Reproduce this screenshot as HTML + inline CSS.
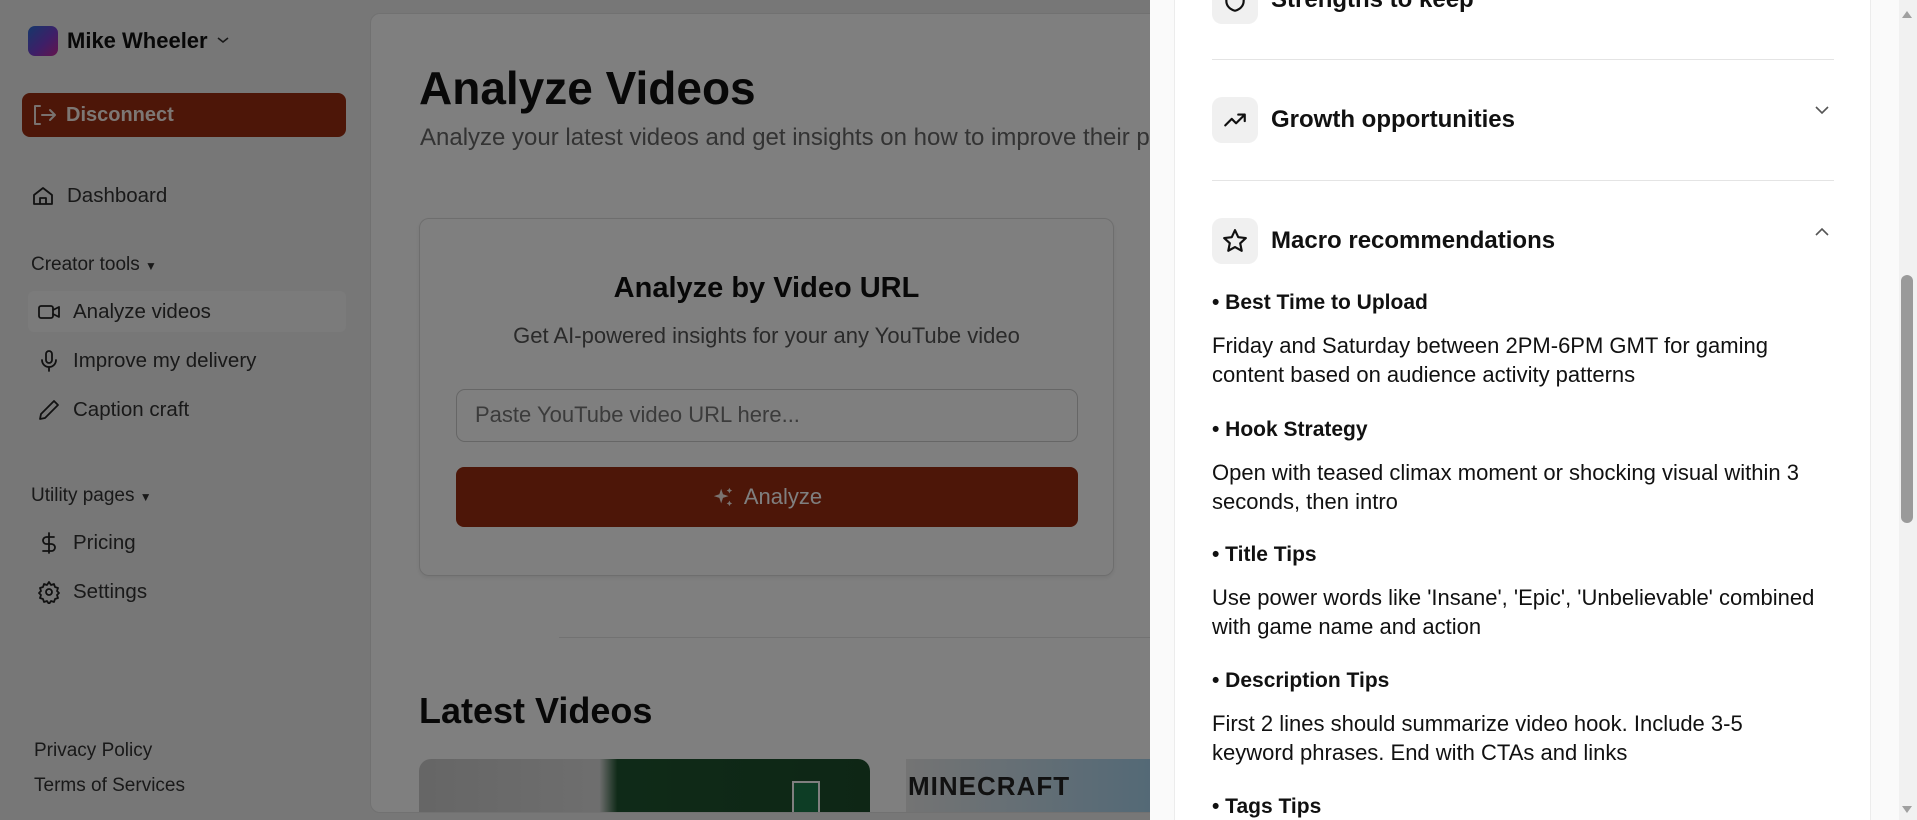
<!DOCTYPE html>
<html style="overflow:hidden;width:1917px;height:820px"><head><meta charset="utf-8"><style>
*{box-sizing:border-box;margin:0;padding:0}
body{width:1917px;height:820px;overflow:hidden;position:relative;background:#eeeeee;font-family:"Liberation Sans",sans-serif;color:#111}
.abs{position:absolute}
.side{left:0;top:0;width:370px;height:820px;background:#eeeeee}
.nav{position:absolute;left:31px;font-size:20.5px;color:#333;display:flex;align-items:center;gap:12px;white-space:nowrap}
.nav svg{width:24px;height:24px;fill:none;stroke:#222;stroke-width:1.8;stroke-linecap:round;stroke-linejoin:round}
.sec{position:absolute;left:31px;font-size:19px;color:#333}
.main{left:370px;top:13px;width:1000px;height:800px;background:#fff;border:1px solid #e2e2e2;border-radius:10px;overflow:hidden}
.overlay{left:0;top:0;width:1150px;height:820px;background:rgba(0,0,0,.5)}
.panel{left:1150px;top:0;width:767px;height:820px;background:#fafafa;overflow:hidden}
.card{position:absolute;left:24px;top:0;width:697px;height:820px;background:#fff;border-left:1px solid #ececec;border-right:1px solid #ececec}
.ib{position:absolute;left:1212px;width:46px;height:46px;background:#f0f0f0;border-radius:10px;display:flex;align-items:center;justify-content:center}
.ib svg{width:26px;height:26px;fill:none;stroke:#111;stroke-width:2;stroke-linecap:round;stroke-linejoin:round}
.h{position:absolute;left:1271px;font-size:24px;font-weight:bold;color:#111;white-space:nowrap}
.hr{position:absolute;left:1212px;width:622px;height:1px;background:#e4e4e4}
.bh{position:absolute;left:1212px;font-size:21px;font-weight:bold;color:#111;white-space:nowrap}
.bt{position:absolute;left:1212px;font-size:22px;line-height:29px;color:#111;white-space:nowrap}
</style></head><body>
<div class="abs side">
 <div class="abs" style="left:28px;top:26px;width:30px;height:30px;border-radius:7px;background:linear-gradient(135deg,#2a6fd6,#7a3fd0 55%,#c8289a)"></div>
 <div class="abs" style="left:67px;top:28px;font-size:22px;font-weight:bold;color:#111">Mike Wheeler</div>
 <svg class="abs" style="left:216px;top:35px" width="14" height="10" viewBox="0 0 14 10"><path d="M2 3l5 4 5-4" fill="none" stroke="#333" stroke-width="1.6"/></svg>
 <div class="abs" style="left:22px;top:93px;width:324px;height:44px;background:#9a2c10;border-radius:8px"></div>
 <svg class="abs" style="left:32px;top:103px" width="26" height="24" viewBox="0 0 26 24"><path d="M8 3H3v18h5M10 12h13M18 7l5 5-5 5" fill="none" stroke="#f2e4de" stroke-width="2" stroke-linecap="round" stroke-linejoin="round"/></svg>
 <div class="abs" style="left:66px;top:104px;font-size:20px;font-weight:bold;color:#fbeee8">Disconnect</div>
 <div class="nav" style="top:184px;left:31px"><svg viewBox="0 0 24 24"><path d="M3 11l9-7 9 7v9H3zM9 20v-6h6v6"/></svg>Dashboard</div>
 <div class="sec" style="top:254px">Creator tools <span style="font-size:12px">▼</span></div>
 <div class="abs" style="left:28px;top:291px;width:318px;height:41px;background:#f6f6f6;border-radius:6px"></div>
 <div class="nav" style="top:300px;left:37px"><svg viewBox="0 0 24 24"><rect x="2" y="6" width="14" height="12" rx="2"/><path d="M16 10l6-3v10l-6-3"/></svg>Analyze videos</div>
 <div class="nav" style="top:349px;left:37px"><svg viewBox="0 0 24 24"><rect x="9" y="2" width="6" height="12" rx="3"/><path d="M5 11a7 7 0 0014 0M12 18v4"/></svg>Improve my delivery</div>
 <div class="nav" style="top:398px;left:37px"><svg viewBox="0 0 24 24"><path d="M17 3l4 4L8 20l-5 1 1-5z"/></svg>Caption craft</div>
 <div class="sec" style="top:485px">Utility pages <span style="font-size:12px">▼</span></div>
 <div class="nav" style="top:531px;left:37px"><svg viewBox="0 0 24 24"><path d="M12 2v20M17 6H9.5a3.5 3.5 0 000 7h5a3.5 3.5 0 010 7H6"/></svg>Pricing</div>
 <div class="nav" style="top:580px;left:37px"><svg viewBox="0 0 24 24"><circle cx="12" cy="12" r="3"/><path d="M12 2l2 3 3-1 1 3 3 1-1 3 2 2-2 2 1 3-3 1-1 3-3-1-2 3-2-3-3 1-1-3-3-1 1-3-2-2 2-2-1-3 3-1 1-3 3 1z"/></svg>Settings</div>
 <div class="abs" style="left:34px;top:740px;font-size:19px;color:#333">Privacy Policy</div>
 <div class="abs" style="left:34px;top:775px;font-size:19px;color:#333">Terms of Services</div>
</div>
<div class="abs main">
 <div class="abs" style="left:48px;top:47px;font-size:46px;font-weight:bold;color:#111">Analyze Videos</div>
 <div class="abs" style="left:49px;top:110px;font-size:24px;color:#666;white-space:nowrap">Analyze your latest videos and get insights on how to improve their performance</div>
 <div class="abs" style="left:48px;top:204px;width:695px;height:358px;border:1px solid #ddd;border-radius:10px;box-shadow:0 2px 4px rgba(0,0,0,.08)"></div>
 <div class="abs" style="left:48px;top:258px;width:695px;text-align:center;font-size:29px;font-weight:bold">Analyze by Video URL</div>
 <div class="abs" style="left:48px;top:309px;width:695px;text-align:center;font-size:22px;color:#555">Get AI-powered insights for your any YouTube video</div>
 <div class="abs" style="left:85px;top:375px;width:622px;height:53px;border:1px solid #ccc;border-radius:9px;font-size:22px;color:#777;padding:12px 18px">Paste YouTube video URL here...</div>
 <div class="abs" style="left:85px;top:453px;width:622px;height:60px;background:#9a2c10;border-radius:8px;color:#fff;font-size:22px;display:flex;align-items:center;justify-content:center;gap:10px">
  <svg width="22" height="22" viewBox="0 0 24 24" fill="#f4e6e0"><path d="M10 3l2 6 6 2-6 2-2 6-2-6-6-2 6-2zM19 2l1 2 2 1-2 1-1 2-1-2-2-1 2-1zM19 16l1 2 2 1-2 1-1 2-1-2-2-1 2-1z"/></svg>Analyze</div>
 <div class="abs" style="left:188px;top:623px;width:800px;height:1px;background:#e4e4e4"></div>
 <div class="abs" style="left:48px;top:676px;font-size:36px;font-weight:bold">Latest Videos</div>
 <div class="abs" style="left:48px;top:745px;width:451px;height:70px;border-radius:12px 12px 0 0;overflow:hidden;background:linear-gradient(90deg,#ccc,#ddd 40%,#1f5530 44%,#1c4d2b)">
  <div class="abs" style="left:373px;top:22px;width:28px;height:34px;background:#1a7a4a;border:2px solid #fff"></div></div>
 <div class="abs" style="left:535px;top:745px;width:465px;height:70px;background:linear-gradient(90deg,#e8e8e8,#9fd0ee 60%,#8ec4e6)">
  <div class="abs" style="left:2px;top:12px;font-size:26px;font-weight:bold;color:#222;letter-spacing:1px">MINECRAFT</div></div>
</div>
<div class="abs overlay"></div>
<div class="abs panel"><div class="card"></div>
 <div class="abs" style="left:749px;top:0;width:18px;height:820px;background:#f1f1f1"></div>
 <div class="abs" style="left:751px;top:275px;width:12px;height:248px;background:#9a9a9a;border-radius:6px"></div>
 <div class="abs" style="left:752px;top:6px;width:0;height:0;border:5px solid transparent;border-bottom:7px solid #a0a0a0"></div>
 <div class="abs" style="left:752px;top:806px;width:0;height:0;border:5px solid transparent;border-top:7px solid #a0a0a0"></div>
</div>
<div class="ib" style="top:-22px"><svg viewBox="0 0 24 24"><path d="M12 3l8 3v6c0 5-4 8-8 9-4-1-8-4-8-9V6z"/></svg></div>
<div class="h" style="top:-14px">Strengths to keep</div>
<div class="hr" style="top:59px"></div>
<div class="ib" style="top:97px"><svg viewBox="0 0 24 24"><path d="M3 17l6-6 4 4 8-8M15 7h6v6"/></svg></div>
<div class="h" style="top:106px">Growth opportunities</div>
<svg class="abs" style="left:1814px;top:104px" width="16" height="12" viewBox="0 0 16 12"><path d="M2 3l6 6 6-6" fill="none" stroke="#555" stroke-width="1.6"/></svg>
<div class="hr" style="top:180px"></div>
<div class="ib" style="top:218px"><svg viewBox="0 0 24 24"><path d="M12 2l3 6.5 7 .8-5.2 4.8 1.4 7L12 17.6 5.8 21l1.4-7L2 9.3l7-.8z"/></svg></div>
<div class="h" style="top:227px">Macro recommendations</div>
<svg class="abs" style="left:1814px;top:226px" width="16" height="12" viewBox="0 0 16 12"><path d="M2 9l6-6 6 6" fill="none" stroke="#555" stroke-width="1.6"/></svg>
<div class="bh" style="top:291px">• Best Time to Upload</div>
<div class="bt" style="top:331px">Friday and Saturday between 2PM-6PM GMT for gaming<br>content based on audience activity patterns</div>
<div class="bh" style="top:418px">• Hook Strategy</div>
<div class="bt" style="top:458px">Open with teased climax moment or shocking visual within 3<br>seconds, then intro</div>
<div class="bh" style="top:543px">• Title Tips</div>
<div class="bt" style="top:583px">Use power words like 'Insane', 'Epic', 'Unbelievable' combined<br>with game name and action</div>
<div class="bh" style="top:669px">• Description Tips</div>
<div class="bt" style="top:709px">First 2 lines should summarize video hook. Include 3-5<br>keyword phrases. End with CTAs and links</div>
<div class="bh" style="top:795px">• Tags Tips</div>
</body></html>
